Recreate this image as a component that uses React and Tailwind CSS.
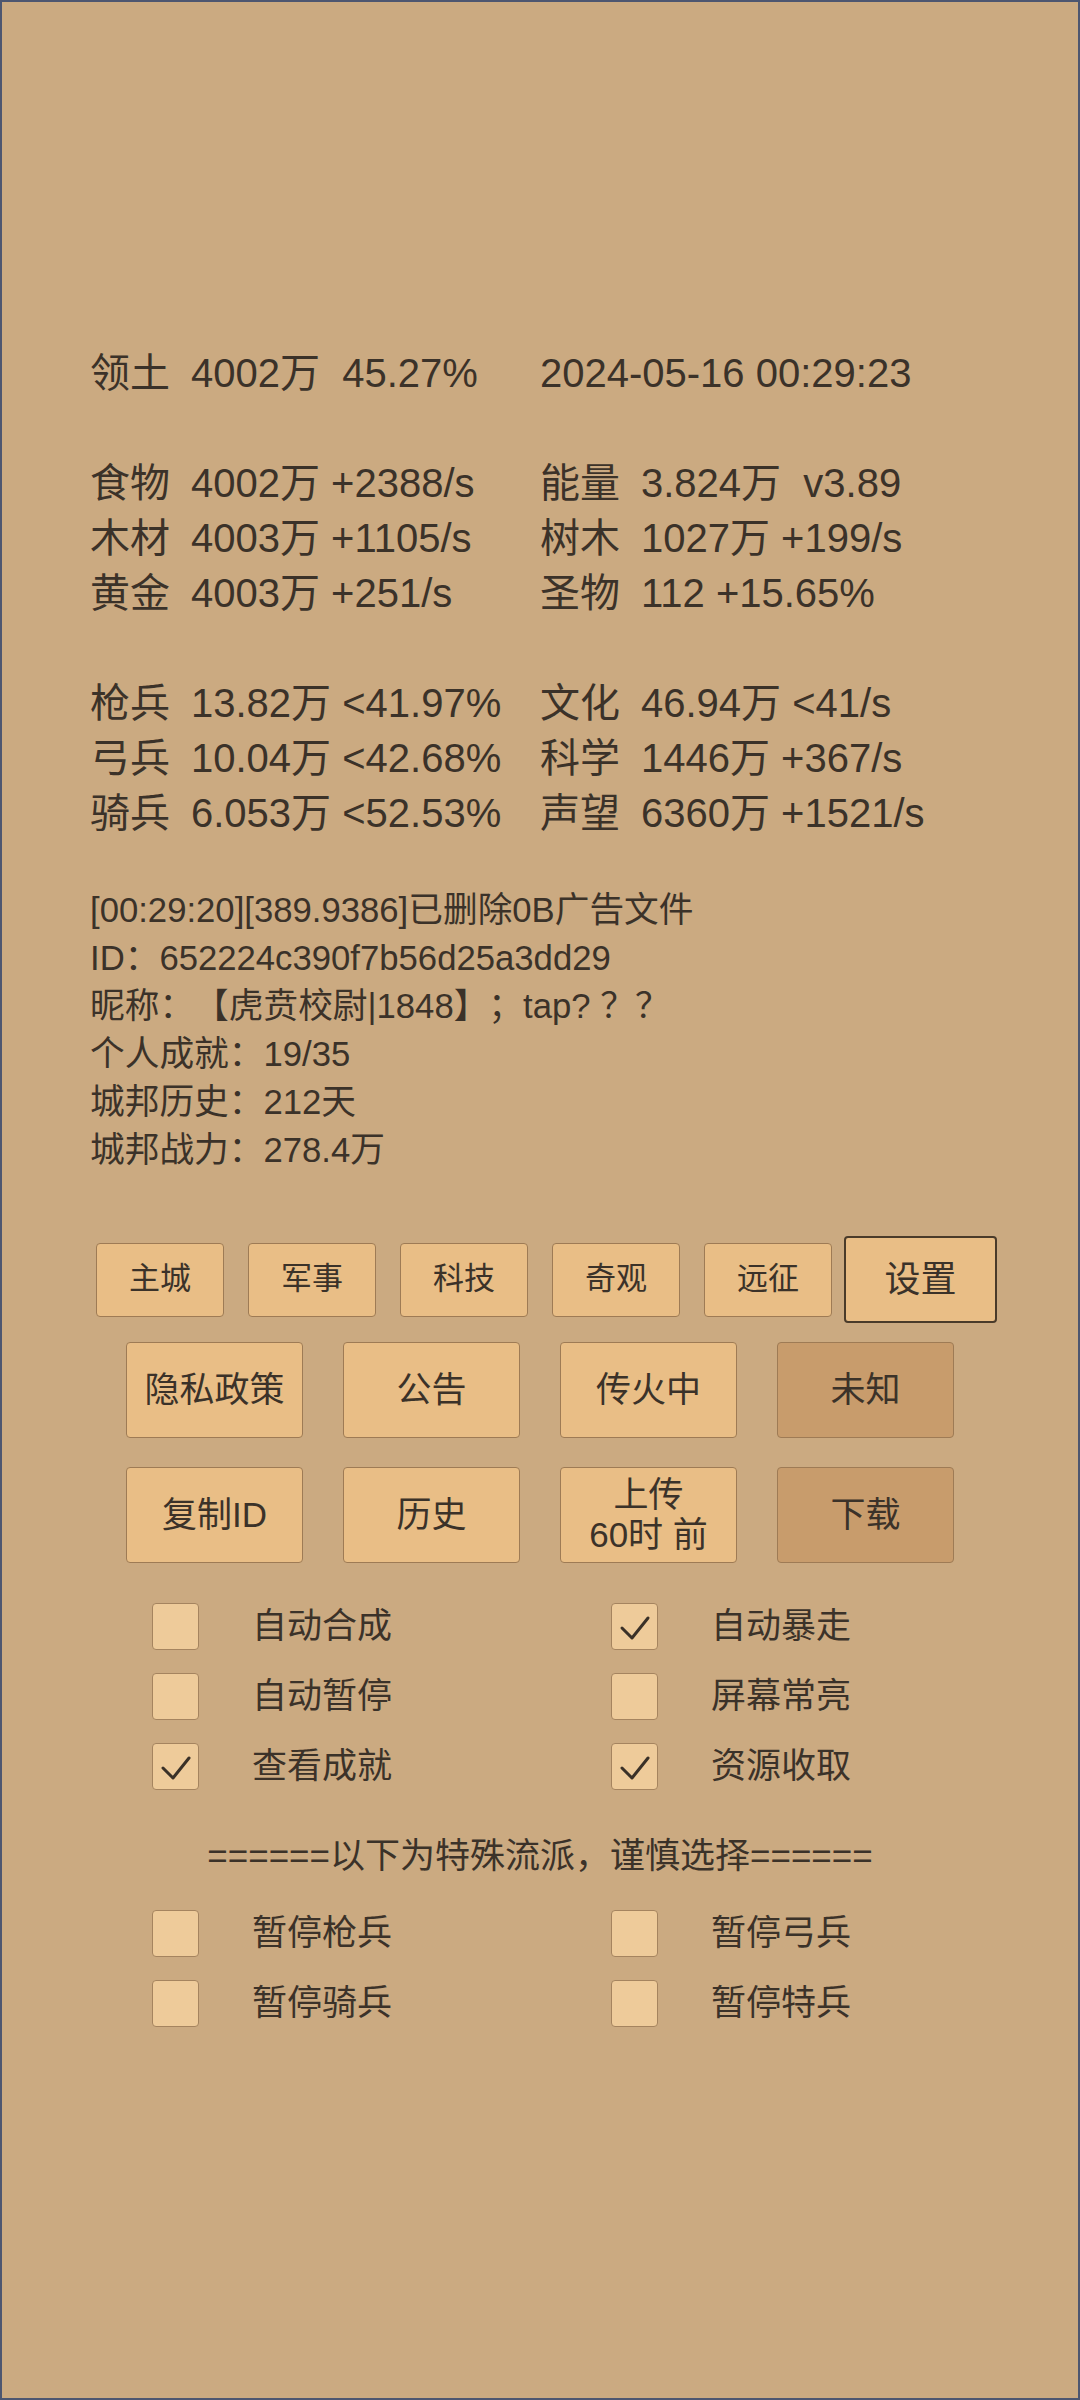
const font = { fontFamily: '"Liberation Sans", "Noto Sans CJK SC", sans-serif' };

const statRows = [
  ['领土', '4002万  45.27%', '', '2024-05-16 00:29:23'],
  null,
  ['食物', '4002万 +2388/s', '能量', '3.824万  v3.89'],
  ['木材', '4003万 +1105/s', '树木', '1027万 +199/s'],
  ['黄金', '4003万 +251/s', '圣物', '112 +15.65%'],
  null,
  ['枪兵', '13.82万 <41.97%', '文化', '46.94万 <41/s'],
  ['弓兵', '10.04万 <42.68%', '科学', '1446万 +367/s'],
  ['骑兵', '6.053万 <52.53%', '声望', '6360万 +1521/s'],
];

const logLines = [
  '[00:29:20][389.9386]已删除0B广告文件',
  'ID：652224c390f7b56d25a3dd29',
  '昵称：【虎贲校尉|1848】；tap? ？？',
  '个人成就：19/35',
  '城邦历史：212天',
  '城邦战力：278.4万',
];

const options = [
  ['自动合成', false, '自动暴走', true],
  ['自动暂停', false, '屏幕常亮', false],
  ['查看成就', true, '资源收取', true],
];

const special = [
  ['暂停枪兵', false, '暂停弓兵', false],
  ['暂停骑兵', false, '暂停特兵', false],
];

function StatRow({ row }) {
  if (!row) return <div className="h-[55px]" />;
  const [l1, v1, l2, v2] = row;
  return (
    <div className="flex h-[55px] items-center whitespace-pre">
      <div className="w-[450px] flex">
        <span className="w-[101px]">{l1}</span>
        <span>{v1}</span>
      </div>
      <div className="flex">
        {l2 ? (
          <>
            <span className="w-[101px]">{l2}</span>
            <span>{v2}</span>
          </>
        ) : (
          <span>{v2}</span>
        )}
      </div>
    </div>
  );
}

function Check({ checked }) {
  return (
    <div className="w-[47px] h-[47px] rounded-[4px] border border-[#a5845f] bg-[#eecb9a]">
      {checked && (
        <svg width="45" height="45" viewBox="0 0 45 45" fill="none">
          <path d="M10 24 L20 34 L36 14" stroke="#3a3128" strokeWidth="3" strokeLinecap="round" strokeLinejoin="round" />
        </svg>
      )}
    </div>
  );
}

function OptionRow({ row }) {
  const [a, ac, b, bc] = row;
  return (
    <div className="flex h-[70px] items-start">
      <div className="w-[459px] flex items-center gap-[53px]">
        <Check checked={ac} />
        <span>{a}</span>
      </div>
      <div className="flex items-center gap-[53px]">
        <Check checked={bc} />
        <span>{b}</span>
      </div>
    </div>
  );
}

const smallBtn = 'w-[128px] h-[74px] rounded-[4px] border-[1.5px] border-[#9e7b55] bg-[#e9be86] text-[31px] flex items-center justify-center';
const bigBtn = 'w-[177px] h-[96px] rounded-[4px] border-[1.5px] border-[#9e7b55] text-[35px] flex items-center justify-center leading-[40px] text-center';

export default function App() {
  return (
    <div style={font} className="w-[1080px] h-[2400px] bg-[#cbaa81] border-2 border-[#4d5670] text-[#3b3229] [text-spacing-trim:space-all]">
      <div className="pt-[343px] pl-[88px] text-[40px]">
        {statRows.map((row, i) => (
          <StatRow key={i} row={row} />
        ))}
      </div>

      <div className="mt-[46px] pl-[88px] text-[34.7px] leading-[48px]">
        {logLines.map((line) => (
          <div key={line}>{line}</div>
        ))}
      </div>

      <div className="mt-[62px] ml-[94px] flex items-center">
        {['主城', '军事', '科技', '奇观', '远征'].map((t) => (
          <div key={t} className={smallBtn + ' mr-[24px]'}>
            {t}
          </div>
        ))}
        <div className="-ml-[12px] w-[153px] h-[87px] rounded-[4px] border-2 border-[#4a3b2a] bg-[#e9be86] text-[36px] flex items-center justify-center">
          设置
        </div>
      </div>

      <div className="mt-[19px] flex justify-center gap-[40px]">
        <div className={bigBtn + ' bg-[#e9be86]'}>隐私政策</div>
        <div className={bigBtn + ' bg-[#e9be86]'}>公告</div>
        <div className={bigBtn + ' bg-[#e9be86]'}>传火中</div>
        <div className={bigBtn + ' bg-[#c89c6c]'}>未知</div>
      </div>

      <div className="mt-[29px] flex justify-center gap-[40px]">
        <div className={bigBtn + ' bg-[#e9be86]'}>复制ID</div>
        <div className={bigBtn + ' bg-[#e9be86]'}>历史</div>
        <div className={bigBtn + ' bg-[#e9be86] text-[34px]'}>
          <div>
            上传
            <br />
            60时 前
          </div>
        </div>
        <div className={bigBtn + ' bg-[#c89c6c]'}>下载</div>
      </div>

      <div className="mt-[37px] pl-[150px] text-[35px]">
        {options.map((row) => (
          <OptionRow key={row[0]} row={row} />
        ))}
      </div>

      <div className="mt-[16px] text-center text-[35px] leading-[60px]">
        ======以下为特殊流派，谨慎选择======
      </div>

      <div className="mt-[21px] pl-[150px] text-[35px]">
        {special.map((row) => (
          <OptionRow key={row[0]} row={row} />
        ))}
      </div>
    </div>
  );
}
